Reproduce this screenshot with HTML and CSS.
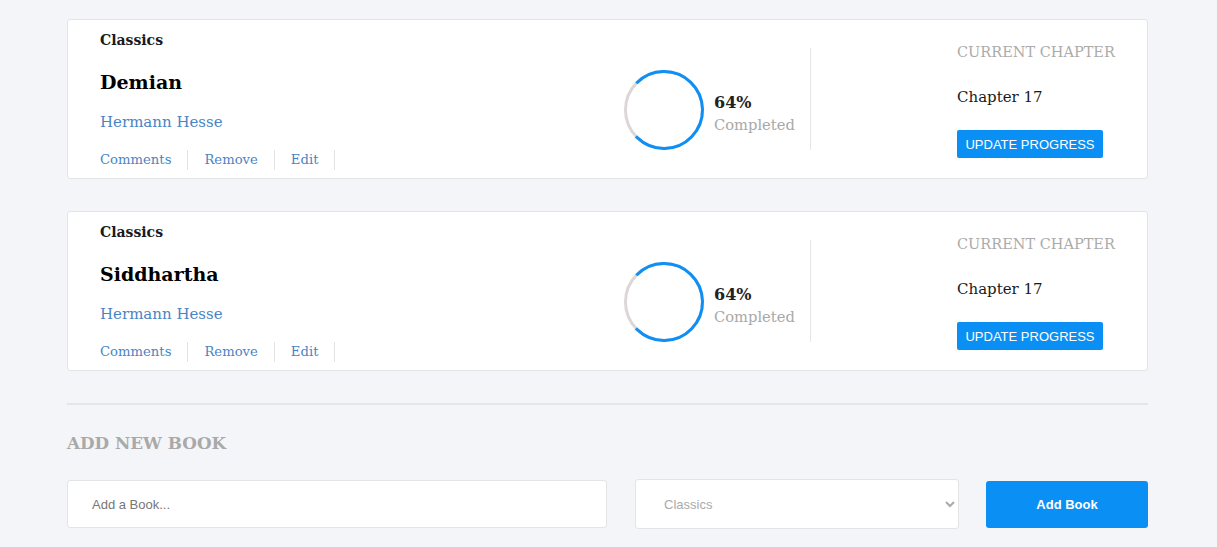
FILE: index.html
```html
<!DOCTYPE html>
<html>
<head>
<meta charset="utf-8">
<link rel="stylesheet" href="styles.css">
</head>
<body>
<main class="page">
  <section class="book-card">
    <div class="book-info">
      <div class="category">Classics</div>
      <h2 class="title">Demian</h2>
      <div class="author">Hermann Hesse</div>
      <nav class="actions">
        <a class="action">Comments</a>
        <a class="action">Remove</a>
        <a class="action">Edit</a>
      </nav>
    </div>
    <div class="progress">
      <svg class="ring" width="82" height="82" viewBox="0 0 82 82">
        <circle cx="41" cy="41" r="38.5" fill="none" stroke="#ddd6d6" stroke-width="3"/>
        <circle cx="41" cy="41" r="38.5" fill="none" stroke="#0d8ff5" stroke-width="3" stroke-dasharray="183 60" transform="rotate(-136 41 41)"/>
      </svg>
      <div class="progress-text">
        <div class="percent">64%</div>
        <div class="completed">Completed</div>
      </div>
    </div>
    <div class="divider"></div>
    <div class="chapter">
      <div class="chapter-label">CURRENT CHAPTER</div>
      <div class="chapter-value">Chapter 17</div>
      <button class="update-btn">UPDATE PROGRESS</button>
    </div>
  </section>

  <section class="book-card">
    <div class="book-info">
      <div class="category">Classics</div>
      <h2 class="title">Siddhartha</h2>
      <div class="author">Hermann Hesse</div>
      <nav class="actions">
        <a class="action">Comments</a>
        <a class="action">Remove</a>
        <a class="action">Edit</a>
      </nav>
    </div>
    <div class="progress">
      <svg class="ring" width="82" height="82" viewBox="0 0 82 82">
        <circle cx="41" cy="41" r="38.5" fill="none" stroke="#ddd6d6" stroke-width="3"/>
        <circle cx="41" cy="41" r="38.5" fill="none" stroke="#0d8ff5" stroke-width="3" stroke-dasharray="183 60" transform="rotate(-136 41 41)"/>
      </svg>
      <div class="progress-text">
        <div class="percent">64%</div>
        <div class="completed">Completed</div>
      </div>
    </div>
    <div class="divider"></div>
    <div class="chapter">
      <div class="chapter-label">CURRENT CHAPTER</div>
      <div class="chapter-value">Chapter 17</div>
      <button class="update-btn">UPDATE PROGRESS</button>
    </div>
  </section>

  <hr class="separator">

  <section class="add-book">
    <h3 class="add-title">ADD NEW BOOK</h3>
    <form class="add-form">
      <input class="book-input" type="text" placeholder="Add a Book...">
      <select class="category-select">
        <option>Classics</option>
      </select>
      <button type="button" class="add-btn">Add Book</button>
    </form>
  </section>
</main>
</body>
</html>
```
FILE: styles.css
```css
* { box-sizing: border-box; }
html, body { margin: 0; padding: 0; }
body {
  background: #f4f5f8;
  font-family: "DejaVu Serif", "Liberation Serif", serif;
  color: #121212;
}
.page {
  width: 1081px;
  margin-left: 67px;
  padding-top: 19px;
}
.book-card {
  display: flex;
  align-items: flex-start;
  height: 160px;
  background: #fff;
  border: 1px solid #e3e4e6;
  border-radius: 3px;
  margin-bottom: 32px;
}
.book-info {
  width: 555px;
  padding-left: 32px;
}
.category {
  font-weight: bold;
  font-size: 14px;
  line-height: 20px;
  margin-top: 10px;
  color: #1a1a1a;
}
.title {
  font-size: 19px;
  line-height: 30px;
  margin: 17px 0 0 0;
  color: #000;
}
.author {
  font-size: 15px;
  line-height: 22px;
  margin-top: 14px;
  color: #4a84c4;
}
.actions {
  display: flex;
  margin-top: 17px;
}
.action {
  font-size: 13.2px;
  line-height: 20px;
  color: #4a84c4;
  padding: 0 16px;
  border-right: 1px solid #e3e3e3;
}
.action:first-child { padding-left: 0; }
.progress {
  width: 187px;
  display: flex;
  align-items: center;
  margin-top: 49px;
}
.ring { display: block; flex: none; }
.progress-text { margin-left: 9px; margin-top: 8px; }
.percent {
  font-weight: bold;
  font-size: 16px;
  line-height: 22px;
  color: #222;
}
.completed {
  font-size: 14.7px;
  line-height: 22px;
  color: #a8a8a8;
}
.divider {
  width: 1px;
  height: 102px;
  margin-top: 28px;
  background: #e6e6e6;
}
.chapter {
  margin-left: 146px;
  width: 189px;
}
.chapter-label {
  margin-top: 22px;
  font-size: 14.5px;
  line-height: 20px;
  color: #ababab;
}
.chapter-value {
  margin-top: 25px;
  font-size: 15px;
  line-height: 20px;
  color: #1a1a1a;
}
.update-btn {
  margin-top: 23px;
  height: 28px;
  width: 146px;
  padding: 0;
  border: none;
  border-radius: 2px;
  background: #0a8ff5;
  color: #fff;
  font-family: "Liberation Sans", Arial, sans-serif;
  font-size: 13px;
}
.separator {
  margin: 0;
  border: none;
  border-top: 2px solid #e4e5e8;
  height: 0;
}
.add-title {
  margin: 26px 0 0 0;
  font-size: 16.8px;
  line-height: 24px;
  font-weight: bold;
  color: #a9a9a9;
}
.add-form {
  display: flex;
  align-items: center;
  margin-top: 24px;
}
.book-input {
  width: 540px;
  height: 48px;
  border: 1px solid #e3e4e6;
  border-radius: 3px;
  background: #fff;
  padding: 0 24px;
  font-family: "Liberation Sans", Arial, sans-serif;
  font-size: 13px;
  color: #333;
}
.book-input::placeholder { color: #777; }
.category-select {
  margin-left: 28px;
  width: 324px;
  height: 50px;
  border: 1px solid #e3e4e6;
  border-radius: 3px;
  background: #fff;
  padding: 0 24px;
  font-family: "Liberation Sans", Arial, sans-serif;
  font-size: 13px;
  color: #aaa;
}
.add-btn {
  margin-left: 27px;
  width: 162px;
  height: 47px;
  border: none;
  border-radius: 3px;
  background: #0a8ff5;
  color: #fff;
  font-family: "Liberation Sans", Arial, sans-serif;
  font-weight: bold;
  font-size: 13px;
}
```
